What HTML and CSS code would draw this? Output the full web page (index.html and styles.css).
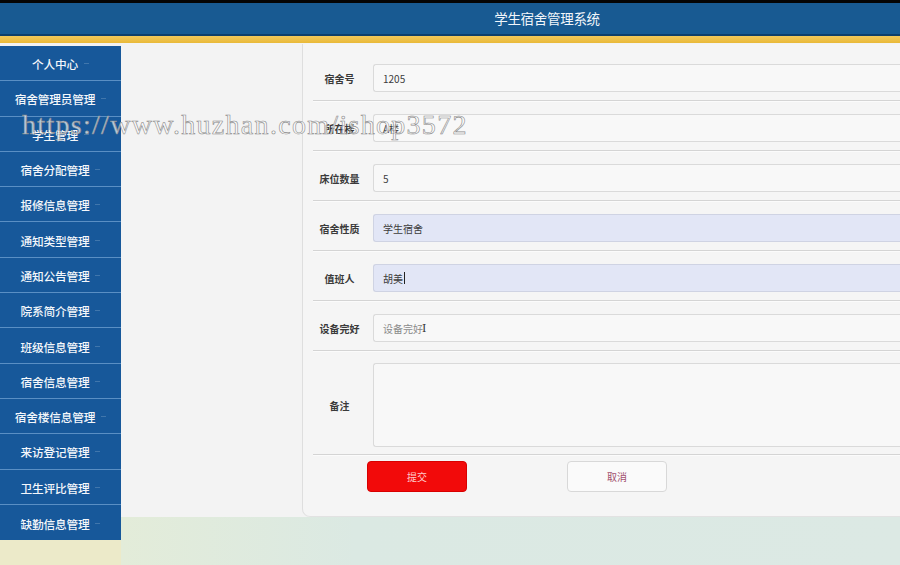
FILE: index.html
```html
<!DOCTYPE html>
<html lang="zh-CN">
<head>
<meta charset="utf-8">
<title>学生宿舍管理系统</title>
<link rel="stylesheet" href="styles.css">
</head>
<body>
<div class="topline"></div>
<header class="header">学生宿舍管理系统</header>
<div class="goldbar"></div>
<div class="layout">
  <aside class="sidebar">
    <nav class="menu">
      <a class="item"><span>个人中心</span><i></i></a>
      <a class="item"><span>宿舍管理员管理</span><i></i></a>
      <a class="item"><span>学生管理</span><i></i></a>
      <a class="item"><span>宿舍分配管理</span><i></i></a>
      <a class="item"><span>报修信息管理</span><i></i></a>
      <a class="item"><span>通知类型管理</span><i></i></a>
      <a class="item"><span>通知公告管理</span><i></i></a>
      <a class="item"><span>院系简介管理</span><i></i></a>
      <a class="item"><span>班级信息管理</span><i></i></a>
      <a class="item"><span>宿舍信息管理</span><i></i></a>
      <a class="item"><span>宿舍楼信息管理</span><i></i></a>
      <a class="item"><span>来访登记管理</span><i></i></a>
      <a class="item"><span>卫生评比管理</span><i></i></a>
      <a class="item"><span>缺勤信息管理</span><i></i></a>
    </nav>
  </aside>
  <main class="content">
    <div class="panel">
      <form class="card">
        <div class="row"><label>宿舍号</label><div class="field">1205</div></div>
        <div class="row"><label>所在楼</label><div class="field">A楼</div></div>
        <div class="row"><label>床位数量</label><div class="field">5</div></div>
        <div class="row"><label>宿舍性质</label><div class="field filled">学生宿舍</div></div>
        <div class="row"><label>值班人</label><div class="field filled">胡美<span class="caret"></span></div></div>
        <div class="row"><label>设备完好</label><div class="field placeholder">设备完好<span class="ibeam">I</span></div></div>
        <div class="row tall"><label>备注</label><div class="field area"></div></div>
        <div class="actions">
          <button type="button" class="btn submit">提交</button>
          <button type="button" class="btn cancel">取消</button>
        </div>
      </form>
    </div>
  </main>
</div>
<div class="watermark">https://www.huzhan.com/ishop3572</div>
</body>
</html>
```
FILE: styles.css
```css
* { box-sizing: border-box; }
html, body { margin: 0; padding: 0; }
body {
  width: 900px;
  height: 565px;
  overflow: hidden;
  font-family: "Noto Sans CJK SC", "Noto Sans", sans-serif;
  background: #dce9e3;
  position: relative;
}
.topline { height: 3px; background: #050505; }
.header {
  height: 33px;
  background: #185a92;
  border-bottom: 2px solid #0f3f6a;
  color: #f2f6fb;
  font-size: 13.5px;
  line-height: 31px;
  text-align: center;
  padding-left: 194px;
  letter-spacing: -0.3px;
}
.goldbar {
  height: 7px;
  background: linear-gradient(#f3c85a, #e9b938);
}
.layout {
  display: flex;
  height: 522px;
}
.sidebar {
  width: 121px;
  padding-top: 3px;
  background: linear-gradient(#f2f2f2 0 3px, #eceac9 3px);
}
.menu {
  background: #17589a;
  display: flex;
  flex-direction: column;
}
.item {
  height: 35.3px;
  border-bottom: 1px solid #5a8fc4;
  display: flex;
  align-items: center;
  justify-content: center;
  gap: 6px;
  color: #f4f7fb;
  font-size: 11.7px;
  font-weight: 500;
  letter-spacing: -0.2px;
  padding-top: 1px;
}
.item:last-child { border-bottom: none; }
.item i {
  display: block;
  width: 5px;
  height: 1px;
  background: rgba(255,255,255,0.18);
}
.content {
  flex: 1;
  background: linear-gradient(90deg, #e3ecd9, #dbe9e3 30%, #dce9e4);
}
.panel {
  height: 474px;
  background: #f3f3f3;
  padding-left: 181px;
  padding-top: 1px;
}
.card {
  height: 473px;
  background: #f5f5f5;
  border-left: 1px solid #dedede;
  border-bottom: 1px solid #e2e2e2;
  border-radius: 0 0 0 8px;
  padding: 7px 0 0 10px;
}
.row {
  display: flex;
  align-items: center;
  padding: 13px 0 8px;
  border-bottom: 1px solid #d4d4d4;
  box-shadow: 0 1px 0 #fbfbfb;
}
.row label {
  width: 53px;
  text-align: center;
  font-size: 10px;
  font-weight: 700;
  color: #3a3a3a;
}
.field {
  margin-left: 7px;
  flex: 1;
  height: 28px;
  background: #f8f8f8;
  border: 1px solid #dadada;
  border-right: none;
  border-radius: 3px 0 0 3px;
  font-size: 10px;
  color: #3c3c3c;
  padding-left: 9px;
  display: flex;
  align-items: center;
}
.field.filled {
  background: #e2e6f6;
  border-color: #cfd3e3;
}
.field.placeholder { color: #8a8a8a; }
.caret {
  display: inline-block;
  width: 1px;
  height: 12px;
  background: #222;
  margin-left: 1px;
}
.ibeam {
  font-family: "DejaVu Serif", serif;
  font-size: 11px;
  color: #333;
  margin-left: -1px;
}
.row.tall { padding: 12px 0 7px; }
.field.area { height: 84px; }
.actions {
  display: flex;
  gap: 100px;
  padding: 6px 0 0 54px;
}
.btn {
  width: 100px;
  height: 31px;
  border-radius: 4px;
  font-family: "Noto Sans CJK SC", sans-serif;
  font-size: 10px;
  padding: 0;
}
.submit {
  background: #f20a0a;
  border: 1px solid #d80000;
  color: #ffc9c9;
}
.cancel {
  background: #fafafa;
  border: 1px solid #d8d8d8;
  color: #a2506e;
}
.watermark {
  position: absolute;
  left: 22px;
  top: 109px;
  font-family: "Liberation Serif", serif;
  font-size: 28px;
  letter-spacing: 1.3px;
  color: rgba(255,255,255,0.7);
  -webkit-text-stroke: 0.6px #8a8a8a;
  white-space: nowrap;
  pointer-events: none;
}
```
